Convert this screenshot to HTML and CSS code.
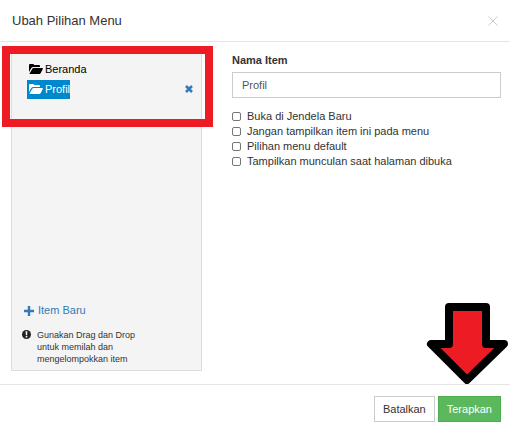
FILE: index.html
```html
<!DOCTYPE html>
<html lang="id">
<head>
<meta charset="UTF-8">
<meta name="viewport" content="width=device-width,initial-scale=1.0">
<title>Ubah Pilihan Menu</title>
<link rel="stylesheet" href="styles.css">
</head>
<body>

<div class="modal">
  <!-- Header -->
  <header class="modal-header">
    <h1>Ubah Pilihan Menu</h1>
    <button class="close" type="button" aria-label="Tutup">
      <svg viewBox="0 0 10 10"><path d="M0.5 0.5L9.5 9.5M9.5 0.5L0.5 9.5"/></svg>
    </button>
  </header>

  <main class="modal-body">
    <!-- Menu tree -->
    <section class="tree-panel">
      <ul class="tree">
        <li>
          <a class="node" href="#">
            <svg class="folder" viewBox="0 0 14 10"><path d="M0 8V1Q0 0 1 0H4Q5 0 5 1H10Q11 1 11 2V3H4Q3 3 2.3 4Z"/><path d="M0.3 10L3.2 5Q3.7 4 4.5 4H13.4Q14.2 4 13.8 5L11.6 9.2Q11.2 10 10.3 10Z"/></svg>Beranda</a>
        </li>
        <li>
          <a class="node selected" href="#">
            <svg class="folder" viewBox="0 0 14 10"><path d="M0 8V1Q0 0 1 0H4Q5 0 5 1H10Q11 1 11 2V3H4Q3 3 2.3 4Z"/><path d="M0.3 10L3.2 5Q3.7 4 4.5 4H13.4Q14.2 4 13.8 5L11.6 9.2Q11.2 10 10.3 10Z"/></svg>Profil</a>
          <button class="remove" type="button" aria-label="Hapus">
            <svg viewBox="0 0 8 8"><path d="M1 1L7 7M7 1L1 7"/></svg>
          </button>
        </li>
      </ul>
      <div class="tree-footer">
        <a class="add" href="#">
          <svg viewBox="0 0 10 10"><path d="M5 0V10M0 5H10"/></svg>Item Baru</a>
        <div class="hint">
          <svg viewBox="0 0 10 10"><circle cx="5" cy="5" r="5"/><path d="M4 1.5H6L5.7 5.6H4.3ZM4.1 6.5H5.9V8.2H4.1Z"/></svg>
          <p>Gunakan Drag dan Drop untuk memilah dan mengelompokkan item</p>
        </div>
      </div>
      <div class="highlight"></div>
    </section>

    <!-- Item form -->
    <form class="item-form">
      <label class="field-label" for="item-name">Nama Item</label>
      <input class="text-input" id="item-name" type="text" value="Profil">
      <div class="options">
        <label><input type="checkbox">Buka di Jendela Baru</label>
        <label><input type="checkbox">Jangan tampilkan item ini pada menu</label>
        <label><input type="checkbox">Pilihan menu default</label>
        <label><input type="checkbox">Tampilkan munculan saat halaman dibuka</label>
      </div>
    </form>
  </main>

  <!-- Footer -->
  <footer class="modal-footer">
    <button class="btn" type="button">Batalkan</button>
    <div class="apply">
      <button class="btn btn-success" type="button">Terapkan</button>
      <svg class="arrow" viewBox="0 0 82 82"><path d="M23 5H60V42H78L41 78L5 42H23Z"/></svg>
    </div>
  </footer>
</div>

</body>
</html>
```

FILE: styles.css
```css
:root{
  --text   : #333;
  --link   : #337ab7;
  --line   : #e5e5e5;
  --panel  : #f4f4f4;
  --accent : #0088cc;
  --mark   : #ed1c24;
}
*{box-sizing:border-box;}
html,body{margin:0;height:100%;}
body{font:11px/15px "Liberation Sans",Arial,sans-serif;color:var(--text);background:#fff;}
a{color:inherit;text-decoration:none;}
button{font:inherit;cursor:pointer;}
svg{display:block;flex:none;}

.modal{min-height:100%;display:flex;flex-direction:column;}

.modal-header{
  display:flex;align-items:center;justify-content:space-between;
  height:42px;padding:0 12px;border-bottom:1px solid var(--line);
}
h1{margin:0;font-size:13px;line-height:20px;font-weight:400;}
.close{padding:0;border:none;background:none;}
.close svg{width:10px;height:10px;fill:none;stroke:#ccc;stroke-width:1;}

.modal-body{flex:1;display:flex;gap:30px;padding:11px 9px 13px 11px;}

.tree-panel{
  position:relative;display:flex;flex-direction:column;justify-content:space-between;
  flex:0 0 191px;padding:5px 8px 5px 10px;background:var(--panel);border:1px solid #ddd;
}
.tree{margin:0;padding:0 0 0 5px;list-style:none;}
.tree li{display:flex;align-items:center;justify-content:space-between;height:20px;}
.node{display:flex;align-items:center;gap:2px;height:19px;padding:0 0 0 2px;color:#000;}
.node.selected{background:var(--accent);color:#fff;}
.folder{width:14px;height:10px;fill:currentColor;}
.remove{padding:0;border:none;background:none;}
.remove svg{width:8px;height:8px;fill:none;stroke:var(--link);stroke-width:2.5;}

.add{display:flex;align-items:center;gap:4px;padding-left:2px;margin-bottom:11px;color:var(--link);}
.add svg{width:10px;height:10px;fill:none;stroke:currentColor;stroke-width:2.4;}
.hint{display:flex;gap:6px;font-size:9px;line-height:12px;}
.hint svg{width:9px;height:9px;margin-top:1px;fill:#222;}
.hint path{fill:#fff;}
.hint p{margin:0;max-width:110px;}

/* frame drawn over the tree */
.highlight{
  position:absolute;top:-8px;left:-10px;right:-12px;height:81px;
  border:8px solid var(--mark);pointer-events:none;
}

.item-form{flex:1;min-width:0;}
.field-label{display:block;margin-bottom:4px;font-weight:700;}
.text-input{
  display:block;width:100%;height:26px;padding:0 9px;border:1px solid #ccc;
  font:inherit;color:#555;background:#fff;
}
.options{margin-top:11px;}
.options label{display:flex;align-items:center;gap:6px;}
.options input{
  appearance:none;width:9px;height:9px;margin:0;
  border:1px solid #767676;border-radius:2px;background:#fff;
}
.options input:checked{background:var(--accent);}

.modal-footer{
  display:flex;justify-content:flex-end;gap:3px;
  padding:11px 9px;border-top:1px solid var(--line);
}
.btn{height:26px;padding:0 8px;border:1px solid #ccc;background:#fff;color:var(--text);}
.btn-success{background:#5cb85c;border-color:#4cae4c;color:#fff;}
.apply{position:relative;}

/* arrow pointing at the apply button */
.arrow{
  position:absolute;right:-7px;bottom:38px;width:82px;height:82px;
  fill:var(--mark);stroke:#000;stroke-width:8;stroke-linejoin:round;pointer-events:none;
}
```
